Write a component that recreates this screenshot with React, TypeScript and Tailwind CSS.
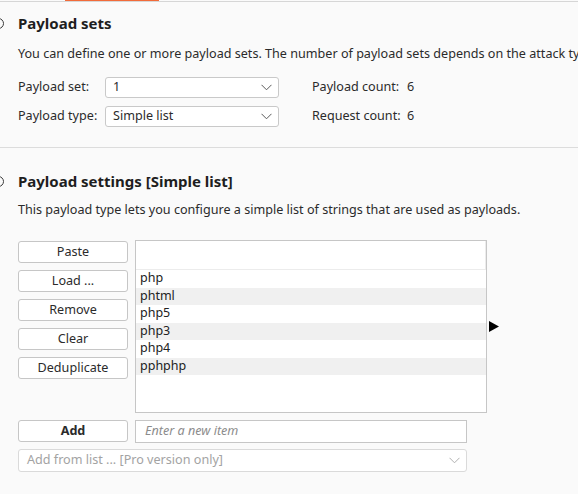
import React from "react"

const Chevron = ({ color = "#5a5a5a" }: { color?: string }) => (
  <svg width="11" height="7" viewBox="0 0 11 7" fill="none">
    <polyline points="0.5,0.8 5.5,5.8 10.5,0.8" stroke={color} strokeWidth="1" />
  </svg>
)

const Select = ({ value }: { value: string }) => (
  <div className="flex h-[21px] w-[174px] items-center justify-between rounded-[3px] border border-[#c9c9c9] bg-white pl-[7px] pr-[6px]">
    <span>{value}</span>
    <Chevron />
  </div>
)

const SectionHeading = ({ title }: { title: string }) => (
  <div className="flex h-[20px] items-center">
    <div className="-ml-[25px] mr-[14px] h-[11px] w-[11px] rounded-full border-[1.5px] border-[#3a3a3a]" />
    <h2 className="text-[15px] font-bold text-[#1e1e1e]">{title}</h2>
  </div>
)

const Btn = ({ label, bold }: { label: string; bold?: boolean }) => (
  <button
    className={`h-[22px] w-[110px] rounded-[3px] border border-[#c6c6c6] bg-white text-[12.6px] text-[#2b2b2b] ${bold ? "font-bold" : ""}`}
  >
    {label}
  </button>
)

export default function App() {
  const payloads = ["php", "phtml", "php5", "php3", "php4", "pphphp"]

  return (
    <div className="h-[494px] w-[578px] overflow-hidden bg-[#fafafa] font-['Noto_Sans',sans-serif] text-[12.6px] text-[#2b2b2b]">
      {/* タブの下線 */}
      <div className="flex h-px">
        <div className="ml-[65px] w-[94px] bg-[#f26b3a]" />
      </div>
      <div className="h-px bg-[#d6d6d6]" />

      {/* Payload sets */}
      <section className="pl-[18px] pt-[11px]">
        <SectionHeading title="Payload sets" />
        <p className="mt-[13px] whitespace-nowrap leading-[16px]">
          You can define one or more payload sets. The number of payload sets depends on the attack type defined in the Positions tab.
        </p>
        <div className="mt-[15px] grid grid-cols-[87px_174px_33px_95px_auto] items-center gap-y-[8px]">
          <span>Payload set:</span>
          <Select value="1" />
          <span />
          <span>Payload count:</span>
          <span>6</span>
          <span>Payload type:</span>
          <Select value="Simple list" />
          <span />
          <span>Request count:</span>
          <span>6</span>
        </div>
      </section>

      <div className="mt-[20px] h-px bg-[#dcdcdc]" />

      {/* Payload settings */}
      <section className="pl-[18px] pt-[23px]">
        <SectionHeading title="Payload settings [Simple list]" />
        <p className="mt-[11px] whitespace-nowrap leading-[16px]">
          This payload type lets you configure a simple list of strings that are used as payloads.
        </p>

        <div className="mt-[22px] flex items-center">
          <div className="flex flex-col gap-[7px] self-start pt-[1px]">
            <Btn label="Paste" />
            <Btn label="Load ..." />
            <Btn label="Remove" />
            <Btn label="Clear" />
            <Btn label="Deduplicate" />
          </div>
          <div className="ml-[7px] flex h-[173px] w-[352px] flex-col border border-[#c6c6c6] bg-white">
            <div className="h-[29px] shrink-0 border-b border-r border-[#ececec]" />
            {payloads.map((p, i) => (
              <div
                key={p}
                className={`flex h-[17.5px] shrink-0 items-center pl-[4px] text-[12.5px] text-[#222] ${i % 2 === 1 ? "bg-[#f0f0f0]" : "bg-white"}`}
              >
                {p}
              </div>
            ))}
          </div>
          <svg className="ml-[2px]" width="11" height="11" viewBox="0 0 11 11">
            <polygon points="0,0 10,5.5 0,11" fill="#000" />
          </svg>
        </div>

        <div className="mt-[7px] flex gap-[7px]">
          <Btn label="Add" bold />
          <div className="flex h-[23px] w-[332px] items-center border border-[#c6c6c6] bg-white pl-[9px] italic text-[#8c8c8c]">
            Enter a new item
          </div>
        </div>
        <div className="mt-[6px] flex h-[23px] w-[449px] items-center justify-between rounded-[3px] border border-[#dadada] bg-white pl-[8px] pr-[6px] text-[#a3a3a3]">
          <span>Add from list ... [Pro version only]</span>
          <Chevron color="#b0b0b0" />
        </div>
      </section>
    </div>
  )
}
